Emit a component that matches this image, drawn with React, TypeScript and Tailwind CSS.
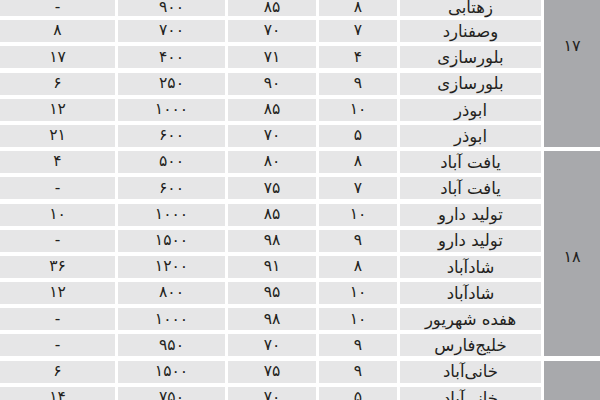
type Row = [string, string, string, string, string];

const rows: Row[] = [
  ['-', '۹۰۰', '۸۵', '۸', 'زهتابی'],
  ['۸', '۷۰۰', '۷۰', '۷', 'وصفنارد'],
  ['۱۷', '۴۰۰', '۷۱', '۴', 'بلورسازی'],
  ['۶', '۲۵۰', '۹۰', '۹', 'بلورسازی'],
  ['۱۲', '۱۰۰۰', '۸۵', '۱۰', 'ابوذر'],
  ['۲۱', '۶۰۰', '۷۰', '۵', 'ابوذر'],
  ['۴', '۵۰۰', '۸۰', '۸', 'یافت آباد'],
  ['-', '۶۰۰', '۷۵', '۷', 'یافت آباد'],
  ['۱۰', '۱۰۰۰', '۸۵', '۱۰', 'تولید دارو'],
  ['-', '۱۵۰۰', '۹۸', '۹', 'تولید دارو'],
  ['۳۶', '۱۲۰۰', '۹۱', '۸', 'شادآباد'],
  ['۱۲', '۸۰۰', '۹۵', '۱۰', 'شادآباد'],
  ['-', '۱۰۰۰', '۹۸', '۱۰', 'هفده شهریور'],
  ['-', '۹۵۰', '۷۰', '۹', 'خلیج‌فارس'],
  ['۶', '۱۵۰۰', '۷۵', '۹', 'خانی‌آباد'],
  ['۱۴', '۷۵۰', '۷۰', '۵', 'خانی‌آباد'],
];

const rowStart = ['row-start-1', 'row-start-2', 'row-start-3', 'row-start-4', 'row-start-5', 'row-start-6', 'row-start-7', 'row-start-8', 'row-start-9', 'row-start-10', 'row-start-11', 'row-start-12', 'row-start-13', 'row-start-14', 'row-start-15', 'row-start-16'];
const colStart = ['col-start-1', 'col-start-2', 'col-start-3', 'col-start-4', 'col-start-5'];

export default function App() {
  return (
    <div
      className="h-[400px] w-[600px] overflow-hidden bg-white text-[#231f20]"
      style={{ fontFamily: '"DejaVu Sans", sans-serif' }}
    >
      <div className="grid grid-cols-[115px_107px_88px_78px_141px_1fr] grid-rows-[16px_repeat(15,22px)] gap-x-[3px] gap-y-[4.2px]">
        {rows.map((row, i) =>
          row.map((cell, j) => (
            <div
              key={`${i}-${j}`}
              className={`${rowStart[i]} ${colStart[j]} flex justify-center bg-[#e6e6e7] ${i === 0 ? 'items-start leading-[15px]' : 'items-center leading-none'} ${j === 4 ? 'text-[16.5px]' : 'text-[15.5px]'} ${j === 4 && i > 0 ? 'pt-[2px]' : ''}`}
              dir="rtl"
            >
              {cell}
            </div>
          ))
        )}
        <div className="col-start-6 row-start-1 row-span-6 flex items-start justify-center bg-[#a8a9ac] pt-[38px] text-[16px] leading-none">
          ۱۷
        </div>
        <div className="col-start-6 row-start-7 row-span-8 flex items-center justify-center bg-[#a8a9ac] pt-[6px] text-[16px] leading-none">
          ۱۸
        </div>
        <div className="col-start-6 row-start-15 row-span-2 bg-[#a8a9ac]" />
      </div>
    </div>
  );
}
